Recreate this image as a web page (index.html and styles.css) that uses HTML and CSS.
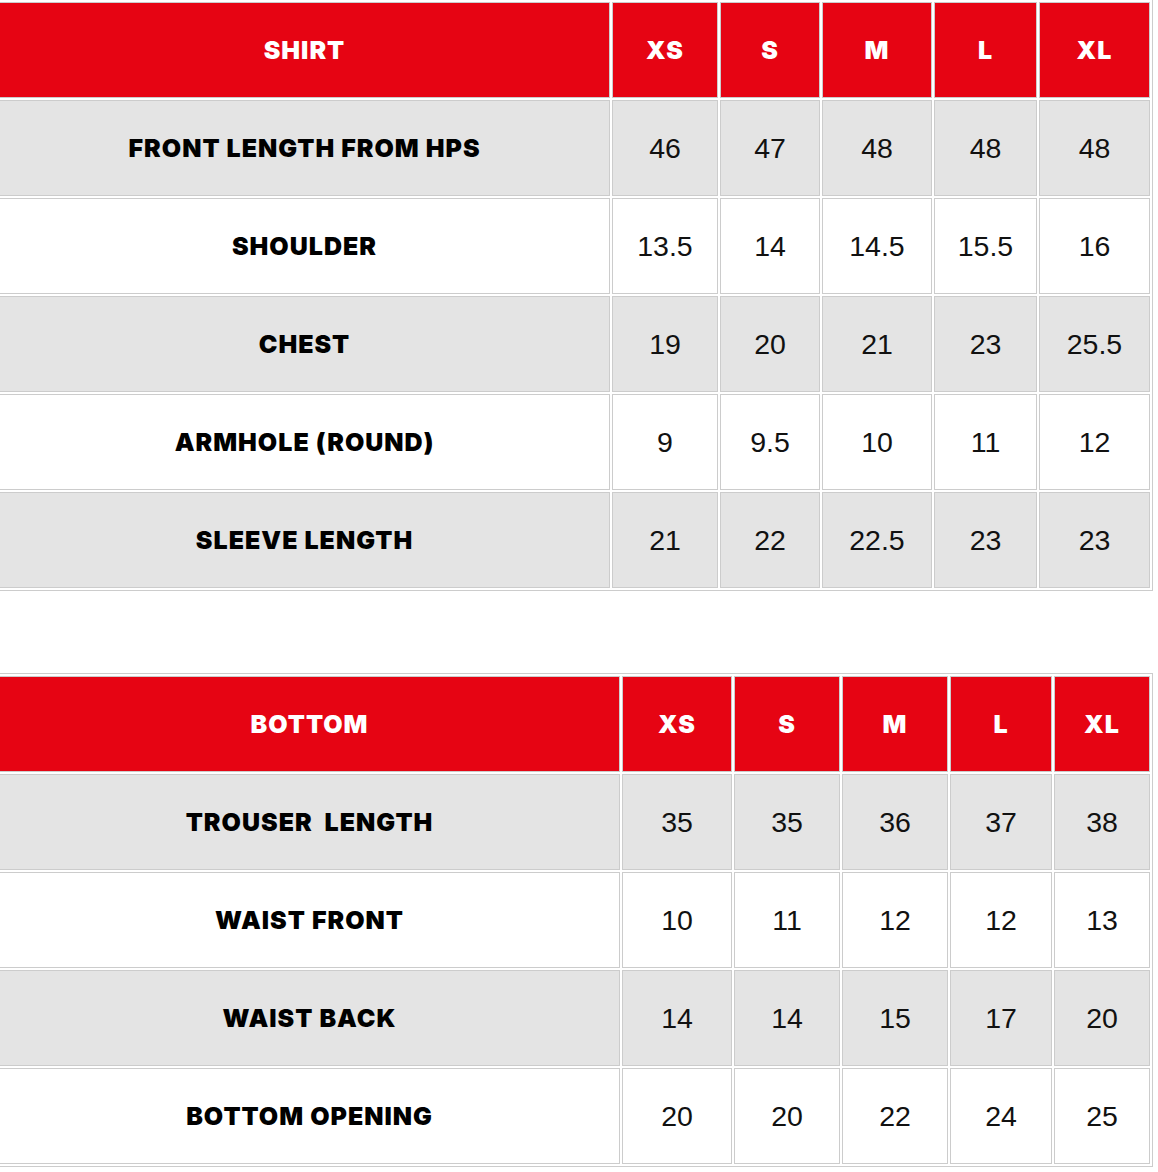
FILE: index.html
```html
<!DOCTYPE html>
<html lang="en">
<head>
<meta charset="utf-8">
<title>Size chart</title>
<link rel="stylesheet" href="styles.css">
</head>
<body>
<table class="chart chart-shirt">
  <thead>
    <tr class="head">
      <th class="c1">SHIRT</th><th class="c2">XS</th><th class="c3">S</th><th class="c4">M</th><th class="c5">L</th><th class="c6">XL</th>
    </tr>
  </thead>
  <tbody>
    <tr class="grey"><td class="label">FRONT LENGTH FROM HPS</td><td>46</td><td>47</td><td>48</td><td>48</td><td>48</td></tr>
    <tr class="white"><td class="label">SHOULDER</td><td>13.5</td><td>14</td><td>14.5</td><td>15.5</td><td>16</td></tr>
    <tr class="grey"><td class="label">CHEST</td><td>19</td><td>20</td><td>21</td><td>23</td><td>25.5</td></tr>
    <tr class="white"><td class="label">ARMHOLE (ROUND)</td><td>9</td><td>9.5</td><td>10</td><td>11</td><td>12</td></tr>
    <tr class="grey"><td class="label">SLEEVE LENGTH</td><td>21</td><td>22</td><td>22.5</td><td>23</td><td>23</td></tr>
  </tbody>
</table>

<table class="chart chart-bottom">
  <thead>
    <tr class="head">
      <th class="c1">BOTTOM</th><th class="c2">XS</th><th class="c3">S</th><th class="c4">M</th><th class="c5">L</th><th class="c6">XL</th>
    </tr>
  </thead>
  <tbody>
    <tr class="grey"><td class="label">TROUSER&nbsp; LENGTH</td><td>35</td><td>35</td><td>36</td><td>37</td><td>38</td></tr>
    <tr class="white"><td class="label">WAIST FRONT</td><td>10</td><td>11</td><td>12</td><td>12</td><td>13</td></tr>
    <tr class="grey"><td class="label">WAIST BACK</td><td>14</td><td>14</td><td>15</td><td>17</td><td>20</td></tr>
    <tr class="white"><td class="label">BOTTOM OPENING</td><td>20</td><td>20</td><td>22</td><td>24</td><td>25</td></tr>
  </tbody>
</table>
</body>
</html>
```

FILE: styles.css
```css
html, body {
  margin: 0;
  padding: 0;
  background: #ffffff;
}

body {
  font-family: "Liberation Sans", Arial, sans-serif;
  overflow: hidden;
}

.chart {
  border-collapse: separate;
  border-spacing: 2px;
  border: 1px solid #cccccc;
  table-layout: fixed;
  margin-left: -4px;
  width: 1157px;
}

.chart-shirt {
  margin-top: -1px;
}

.chart-bottom {
  margin-top: 82px;
}

.chart th,
.chart td {
  box-sizing: border-box;
  height: 96px;
  border: 1px solid #cccccc;
  padding: 0;
  text-align: center;
  vertical-align: middle;
}

.chart th {
  background: #e60413;
  color: #ffffff;
  font-family: Inter, "Open Sans", sans-serif;
  font-weight: 900;
  font-size: 25px;
  letter-spacing: 1px;
}

.chart td {
  color: #111111;
  font-size: 28.5px;
  font-weight: 400;
}

.chart td.label {
  font-family: Inter, "Open Sans", sans-serif;
  font-weight: 900;
  font-size: 25px;
  letter-spacing: 1px;
  color: #000000;
}

.grey td {
  background: #e4e4e4;
}

.white td {
  background: #ffffff;
}

.chart-shirt .c1 { width: 611px; }
.chart-shirt .c2 { width: 106px; }
.chart-shirt .c3 { width: 100px; }
.chart-shirt .c4 { width: 110px; }
.chart-shirt .c5 { width: 103px; }
.chart-shirt .c6 { width: 111px; }

.chart-bottom .c1 { width: 621px; }
.chart-bottom .c2 { width: 110px; }
.chart-bottom .c3 { width: 106px; }
.chart-bottom .c4 { width: 106px; }
.chart-bottom .c5 { width: 102px; }
.chart-bottom .c6 { width: 96px; }
```
